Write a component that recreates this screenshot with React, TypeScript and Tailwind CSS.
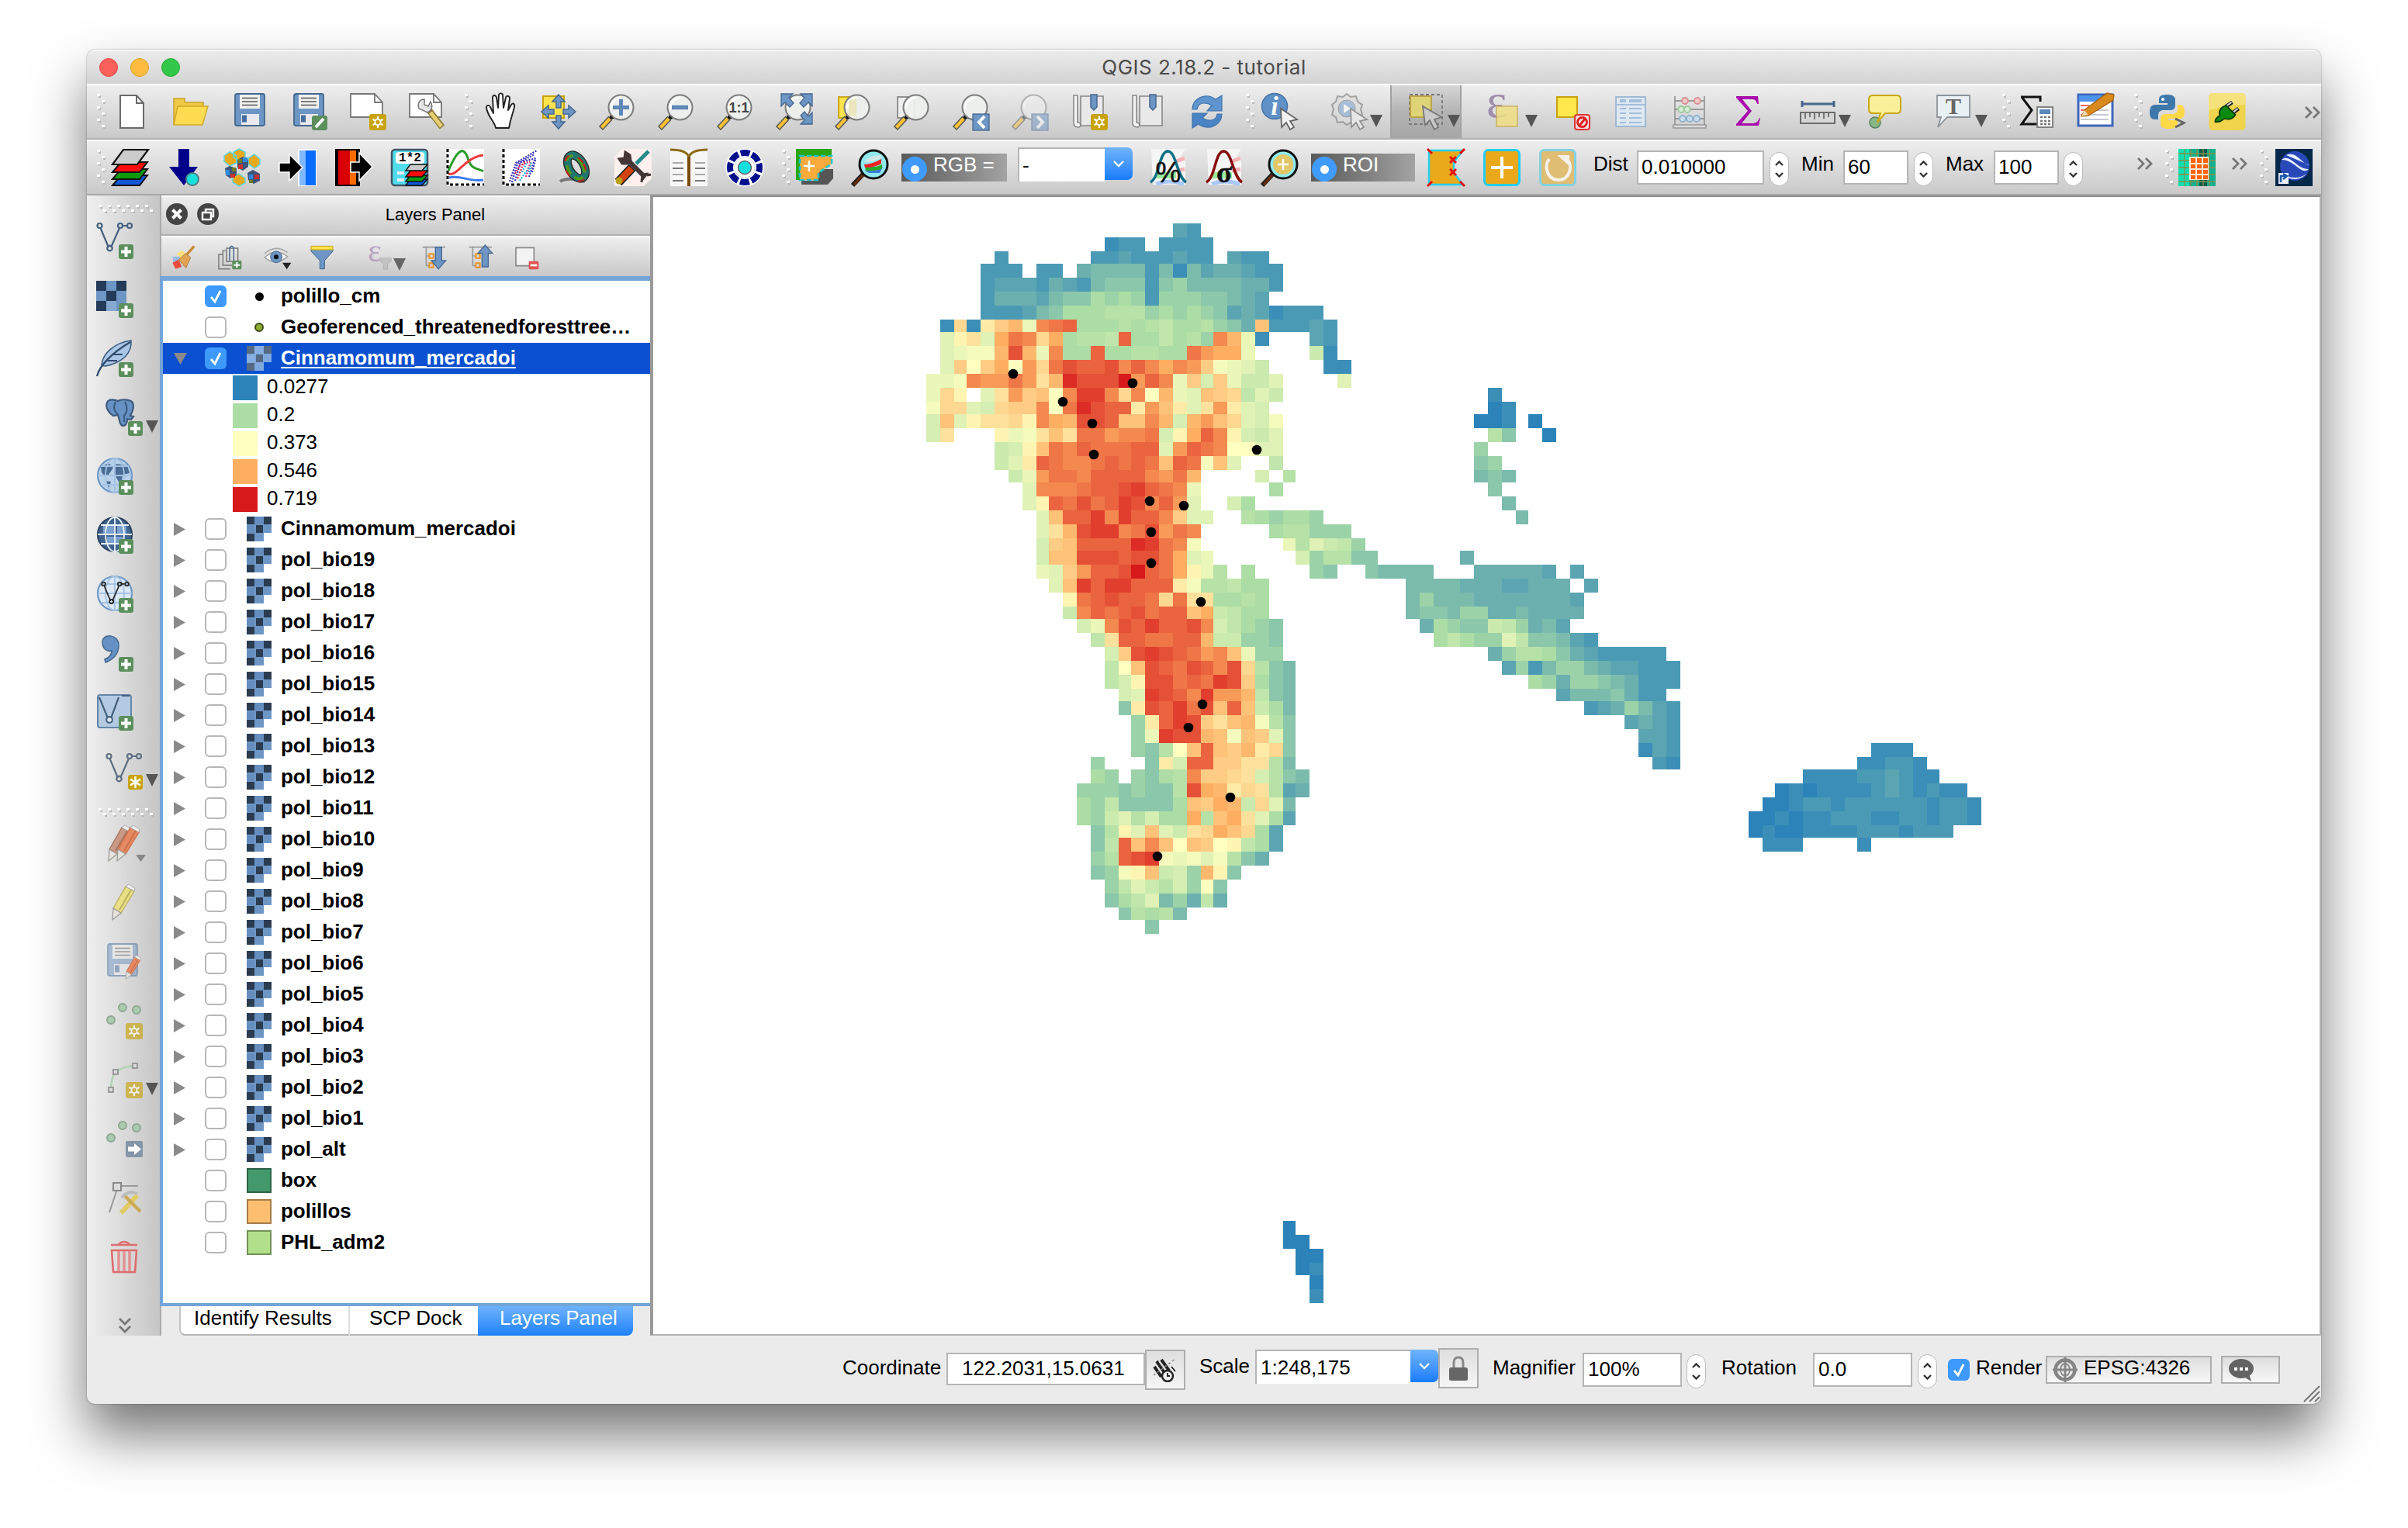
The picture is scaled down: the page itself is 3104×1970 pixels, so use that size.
import React from "react";

/* ---------- raster layer ---------- */

// Each row lists runs as "column:values"; a value is a position on the 0..32 colour ramp.
const RASTER: Record<number, string> = {
  0: "18:32",
  1: "13:122 17:2222",
  2: "5:2 12:223222322 22:322",
  3: "4:222 8:22 11:455552515344322",
  4: "4:2333243256662675555442",
  5: "4:244435668787277766543",
  6: "4:2223568889997878763431222",
  7: "1:1k1ilneqrs888989a88976 23:4m22232",
  8: "1:dhjdorqko899as88a897qne1 28:32",
  9: "1:deffntneq88s889988rpooe 28:b1",
  10: "1:dlglogpkrtsstqsqoqplfedb 29:11",
  11: "0:eefqpprpjnvtttwpsqelclebbd 30:d",
  12: "0:ekh 4:djplmgquuqkqgnedmlkadb 41:1",
  13: "0:fkkdckllqgrvtssipmidjpidc 41:01",
  14: "0:cmdhjjkhqonttsmmqncnpmkdcf 40:001 44:0",
  15: "0:cj 5:hefjmjrrpqqrchosqhcbd 41:96 45:0",
  16: "5:bchmrqsrrrssdpsrqggdd 40:7",
  17: "5:bdisrqqrsrsrmsrfmd 25:a 40:67",
  18: "6:beprrqssssqprn 24:c 26:9 40:565",
  19: "7:dqqqrsstusrqe 25:8 41:6",
  20: "7:dhsrtrsutqspd 22:c8 42:5",
  21: "8:dmssuqussqldd 23:987887 43:5",
  22: "8:djntuuqrtprq 25:899777",
  23: "8:clmssssvurqf 26:e9dba7",
  24: "8:cmmtttsttrode 27:c79966 39:4",
  25: "8:edlpsstwsrohe9 23:8 28:76 32:65555 40:444443 47:3",
  26: "9:dmusuusssif99a88 35:555544433444 48:3",
  27: "10:hrstssrkrjj8898 35:5755544444443",
  28: "10:bqsrstrssmoba88 35:5665774454444",
  29: "11:ceqtsusstqca876 36:48766ba7453",
  30: "12:ajssrrssnbb776 37:8a877da665 47:32",
  31: "13:cltutsrpqme77 41:4799864322222",
  32: "13:agmtsrtsqtk965 42:3725775433222",
  33: "13:achttrsrutl865 44:87477654222",
  34: "14:cdutsquppna65 46:35556422",
  35: "14:6itsurtmsmb85 48:2347532",
  36: "15:7isutljmnf96 51:3432",
  37: "15:7euttnmfmld6 52:332",
  38: "15:769gmsmlnik6 52:132 69:111",
  39: "12:7 16:6icsslljj95 53:21 68:11221",
  40: "12:87 15:7689qllkjc965 64:1111223211",
  41: "11:777676 17:69tonikj934 62:01011112321211",
  42: "11:87a66668mlonbkd5 61:0012212222221221",
  43: "11:87bd9c88o9mojd83 60:00101122211221221",
  44: "12:69hdmdbjkomk83 60:010011112221222",
  45: "12:6asmqmgmlgha83 61:111 68:1",
  46: "12:79stufefdf964",
  47: "12:67fhmbc7nh6",
  48: "13:7adb9c7g6",
  49: "13:68ad574a4",
  50: "14:69895",
  51: "16:6",
  73: "26:0",
  74: "26:00",
  75: "27:00",
  76: "27:01",
  77: "28:0",
  78: "28:1",
};

const NARROW_COLS = [2, 8, 14, 20, 26, 32, 38, 43, 49, 55, 61, 67, 73];
const NARROW_ROWS = [2, 7, 13, 18, 23, 28, 34, 39, 44, 50, 55, 60, 66, 71, 76];
const edge = (origin: number, narrow: number[], i: number) =>
  origin + i * 18 - 2 * narrow.filter((n) => n < i).length;
const colX = (i: number) => edge(1194, NARROW_COLS, i);
const rowY = (i: number) => edge(288, NARROW_ROWS, i);

const STOPS = [
  [43, 131, 186],
  [171, 221, 164],
  [255, 255, 191],
  [253, 174, 97],
  [215, 25, 28],
];
const ramp = (c: string) => {
  const v = parseInt(c, 36) / 8;
  const k = Math.min(3, Math.floor(v));
  const t = v - k;
  return `rgb(${STOPS[k].map((a, i) => Math.round(a + (STOPS[k + 1][i] - a) * t)).join(",")})`;
};

const POINTS = [
  [1306, 482], [1460, 494], [1370, 518], [1408, 546], [1410, 586], [1620, 580],
  [1482, 646], [1526, 652], [1484, 686], [1484, 726], [1548, 776], [1550, 908],
  [1532, 938], [1586, 1028], [1492, 1104],
];

function MapCanvas() {
  const cells: React.ReactNode[] = [];
  for (const [r, runs] of Object.entries(RASTER)) {
    const row = Number(r);
    for (const run of runs.split(" ")) {
      const [start, vals] = run.split(":");
      [...vals].forEach((c, k) => {
        const col = Number(start) + k;
        cells.push(
          <rect key={`${row}-${col}`} x={colX(col)} y={rowY(row)} width={colX(col + 1) - colX(col)} height={rowY(row + 1) - rowY(row)} fill={ramp(c)} />
        );
      });
    }
  }
  return (
    <svg className="block h-[1466px] w-[2148px]" viewBox="842 254 2148 1466" shapeRendering="crispEdges">
      {cells}
      <g shapeRendering="auto">
        {POINTS.map(([x, y]) => (
          <circle key={`${x},${y}`} cx={x} cy={y} r="6.3" fill="#000" />
        ))}
      </g>
    </svg>
  );
}

/* ---------- icons ---------- */

type P = { children?: React.ReactNode; className?: string };
const I = ({ children, className = "size-12" }: P) => (
  <svg className={`${className} block shrink-0 overflow-visible`} viewBox="0 0 48 48" fill="none">
    {children}
  </svg>
);

const Star = () => (
  <g>
    <rect x="26" y="27" width="22" height="21" rx="3" fill="#c8a30c" />
    <path d="M37 30v15M30.5 33.7l13 7.6M30.5 41.3l13-7.6" stroke="#fff" strokeWidth="2.2" />
    <circle cx="37" cy="37.5" r="3.6" fill="#c8a30c" stroke="#fff" strokeWidth="1.8" />
  </g>
);
const Plus = () => (
  <g>
    <rect x="29" y="29" width="19" height="19" rx="3" fill="#5b8f5c" />
    <path d="M38.500 32v13M32 38.500h13" stroke="#fff" strokeWidth="4" />
  </g>
);
const Lens = ({ children }: P) => (
  <g>
    <path d="M2.500 45.500L15 32" stroke="#555" strokeWidth="7" />
    <path d="M3.500 44.500L14 33" stroke="#fcc234" strokeWidth="4.200" />
    <circle cx="17" cy="30.500" r="3" fill="#111" />
    <circle cx="28.500" cy="18.500" r="16" fill="#eef0ee" fillOpacity=".93" stroke="#7d7d7d" strokeWidth="2" />
    <path d="M16 20a13 13 0 0 1 13-14" stroke="#fff" strokeWidth="3" opacity=".8" />
    {children}
  </g>
);
const Cursor = () => <path d="M25 20l1 24 6-6 5 9 5-3-5-8 9-2z" fill="#f2f2f2" stroke="#666" strokeWidth="1.800" />;
const Disk = () => (
  <g>
    <rect x="5" y="1" width="38" height="41" rx="2.500" fill="#6d96c5" stroke="#44678f" strokeWidth="1.800" />
    <path d="M11 2h26v18H11z" fill="#f1f1ee" />
    <path d="M14 6.500h20M14 11h20M14 15.500h20" stroke="#555" strokeWidth="1.600" />
    <path d="M13 27h23v14H13z" fill="#e9e9ee" />
    <path d="M14 28.500h6v9h-6z" fill="#456d9e" />
  </g>
);
const Page = () => (
  <path d="M2 1h31l10 11v19H2z" fill="#fff" stroke="#777" strokeWidth="1.800" />
);
const V = ({ c = "#45617f" }: { c?: string }) => (
  <g stroke={c} strokeWidth="2.200">
    <path d="M5.500 8L16 33M19 33L30 8M34 5h5" />
    <circle cx="4.500" cy="5" r="3" /><circle cx="31" cy="5" r="3" /><circle cx="43" cy="5" r="3" /><circle cx="17.500" cy="34" r="3.300" />
  </g>
);
const Arrow = ({ className = "ml-[2px]" }: P) => (
  <svg className={`${className} mt-7 block h-4 w-4 shrink-0`} viewBox="0 0 16 16"><path d="M0 0h16L8 16z" fill="#555" /></svg>
);

const NewDoc = () => (<I><path d="M9 3h21l9 10v32H9z" fill="#fff" stroke="#6b6b6b" strokeWidth="2" /><path d="M30 3v10h9" stroke="#6b6b6b" strokeWidth="2" /></I>);
const Folder = () => (<I><path d="M2 41V7h14v5h24v5" fill="#efcb45" stroke="#c9a227" strokeWidth="1.500" /><path d="M2 41L7 17h39l-7 24z" fill="#fddc52" stroke="#d3a92a" strokeWidth="1.500" /></I>);
const Save = () => <I><Disk /></I>;
const SaveAs = () => (<I><Disk /><rect x="28" y="29" width="20" height="19" rx="3" fill="#5b8f5c" /><path d="M33 44L43 33" stroke="#fff" strokeWidth="4" /></I>);
const NewComposer = () => (<I><Page /><path d="M33 1v11h10" stroke="#777" strokeWidth="1.800" /><Star /></I>);
const Manager = () => (<I><Page /><path d="M33 1v11h10" stroke="#777" strokeWidth="1.800" /><path d="M27 22l17 22" stroke="#8a7a3a" strokeWidth="8" /><path d="M29 25l14 18" stroke="#e8cf72" strokeWidth="5" /><path d="M21 8c-7 0-9 6-7 12l11 5c6-3 7-8 4-14l-3 6-5-2z" fill="#e6e6e6" stroke="#777" strokeWidth="1.500" /></I>);
const Hand = () => (<I><path transform="translate(2 0)" d="M17 45c-1-8-10-14-12-26 0-4 4-4 5-1l4 8-1-20c0-4 4-4 5 0l2 13 1-16c0-4 5-3 5 0l1 16 3-13c1-4 5-2 5 1l-2 15 4-7c2-3 5-1 4 3-2 9-5 15-7 27z" fill="#fff" stroke="#222" strokeWidth="1.900" strokeLinejoin="round" /></I>);
const PanSel = () => (<I><rect x="4" y="4" width="27" height="28" fill="#ffe34d" stroke="#c9a212" strokeWidth="2" /><path d="M24 2l8 9h-5v8h-6v-8h-5zM24 46l8-9h-5v-8h-6v8h-5zM2 24l9-8v5h7v6h-7v5zM46 24l-9-8v5h-7v6h7v5z" fill="#6d96c5" stroke="#44678f" strokeWidth="1.500" /></I>);
const ZoomIn = () => <I><Lens><path d="M28.500 8v21M18 18.500h21" stroke="#5e88b8" strokeWidth="5" /></Lens></I>;
const ZoomOut = () => <I><Lens><path d="M18 18.500h21" stroke="#5e88b8" strokeWidth="5.500" /></Lens></I>;
const Zoom11 = () => <I><Lens><text x="28.500" y="25" textAnchor="middle" fontFamily="Liberation Sans" fontWeight="bold" fontSize="18" fill="#444">1:1</text></Lens></I>;
const ZoomFull = () => (<I><Lens /><path d="M7 1h15l-5 5 6 7-5 5-6-6-5 5zM47 1H32l5 5-6 7 5 5 6-6 5 5zM47 40H32l5-5-5-6 5-5 5 6 5-5z" fill="#6d96c5" stroke="#44678f" strokeWidth="1.300" /></I>);
const ZoomSel = () => (<I><rect x="5" y="5" width="22" height="27" fill="#ffe34d" stroke="#c9a212" strokeWidth="1.800" /><Lens><path d="M28 7v22h-10V10z" fill="#e9e2b0" opacity=".8" /></Lens></I>);
const ZoomLayer = () => (<I><rect x="5" y="5" width="22" height="27" fill="#eee" stroke="#888" strokeWidth="1.800" /><Lens /></I>);
const ZoomLast = () => (<I><Lens /><rect x="26" y="27" width="21" height="21" fill="#6d96c5" stroke="#44678f" strokeWidth="1.300" /><path d="M41 30l-7 7.500 7 7.500" stroke="#fff" strokeWidth="4" /></I>);
const ZoomNext = () => (<I className="size-12 opacity-50"><Lens /><rect x="26" y="27" width="21" height="21" fill="#6d96c5" stroke="#44678f" strokeWidth="1.300" /><path d="M33 30l7 7.500-7 7.500" stroke="#fff" strokeWidth="4" /></I>);
const BookBody = () => (<g><path d="M13 4h29v38H13z" fill="#e9e9e9" stroke="#888" strokeWidth="1.600" /><path d="M4 3h5v35c5 0 5 6 1 6-4 0-6-2-6-6z" fill="#f4f4f4" stroke="#888" strokeWidth="1.600" /><path d="M26 2h8v16l-4 4-4-4z" fill="#6d96c5" stroke="#44678f" strokeWidth="1.500" /></g>);
const BookmarkNew = () => <I><BookBody /><Star /></I>;
const Bookmarks = () => <I><BookBody /></I>;
const Refresh = () => (<I><path d="M5 21C5 8 21-2 35 8l8-5v20H24l6-7c-9-6-18-3-19 5z" fill="#5f94cf" stroke="#3f73ac" strokeWidth="1.200" /><path d="M43 27c0 13-16 23-30 13l-8 5V26h19l-6 6c9 6 18 3 19-5z" fill="#4a84c4" stroke="#3f73ac" strokeWidth="1.200" /></I>);
const Identify = () => (<I><circle cx="17" cy="17" r="16.500" fill="#5f90c6" stroke="#4673a6" strokeWidth="1.500" /><text x="17" y="28" textAnchor="middle" fontFamily="Liberation Serif" fontStyle="italic" fontWeight="bold" fontSize="34" fill="#fff">i</text><Cursor /></I>);
const RunAction = () => (<I className="size-12 opacity-60"><path d="M20 1l5 4 7-1 2 7 6 4-2 6 2 7-6 4-2 7-7-1-5 3-5-4-7 1-2-7-5-3 2-7-2-6 5-4 2-7 7 1z" fill="#ddd" stroke="#777" strokeWidth="2" /><circle cx="20" cy="20" r="11" fill="#83a8d3" stroke="#777" /><path d="M16 14l9 6-9 6z" fill="#fff" /><Cursor /></I>);
const SelectRect = () => (<I><rect x="1" y="2" width="42" height="38" stroke="#777" strokeWidth="1.800" strokeDasharray="4 3" /><rect x="2" y="4" width="27" height="27" fill="#dfd377" stroke="#b9a142" strokeWidth="1.800" /><path d="M18 17l3 24 6-6 6 12 5-3-5-10 9-3z" fill="#c9c9c9" stroke="#777" strokeWidth="1.800" /></I>);
const SelectExpr = () => (<I><text x="0" y="31" fontFamily="Liberation Serif" fontSize="62" fill="#a08cab">ε</text><rect x="13" y="17" width="27" height="26" fill="#f1e07c" stroke="#cdb35c" strokeWidth="1.800" opacity=".8" /></I>);
const Deselect = () => (<I><rect x="5" y="5" width="26" height="26" fill="#ffe74c" stroke="#c9a212" strokeWidth="2" /><rect x="28" y="28" width="19" height="19" rx="3" fill="#f6dcdc" stroke="#d33" strokeWidth="2" /><circle cx="37.500" cy="37.500" r="6" stroke="#d22" strokeWidth="2.800" /><path d="M33 43l9-11" stroke="#d22" strokeWidth="2.800" /></I>);
const Table = () => (<I><rect x="5" y="5" width="38" height="38" fill="#dde8f2" stroke="#9bb5d2" strokeWidth="1.800" /><path d="M10 10h8M22 10h16" stroke="#a5bedb" strokeWidth="4" /><path d="M5 15h38M10 20h8M22 20h16M10 26h8M22 26h16M10 32h8M22 32h16M10 38h8M22 38h16" stroke="#a5bedb" strokeWidth="2.200" /></I>);
const Abacus = () => (<I><path d="M5 4v38M43 4v38M5 10h38M5 21h38M5 33h38" stroke="#999" strokeWidth="1.800" /><path d="M3 41h42v4H3z" fill="#ddd" stroke="#999" strokeWidth="1.600" /><g strokeWidth="1.800"><g fill="#f2c9c9" stroke="#d89090"><ellipse cx="18" cy="10" rx="4" ry="4" /><ellipse cx="34" cy="10" rx="4" ry="4" /></g><g fill="#d3ecd3" stroke="#9fc99f"><circle cx="13" cy="21" r="4" /><circle cx="21" cy="21" r="4" /></g><g fill="#c7dcec" stroke="#8fb1cf"><circle cx="15" cy="33" r="4" /><circle cx="24" cy="33" r="4" /><circle cx="33" cy="33" r="4" /></g></g></I>);
const Sum = () => (<I><path d="M8 4h28l1 10h-2c-1-5-3-6-8-6H16l12 15-13 16h14c5 0 7-2 9-7h1l-2 10H8v-2l15-17L8 6z" fill="#a80cab" /></I>);
const Ruler = () => (<I><path d="M3 14h41M3 10v8M44 10v8" stroke="#47678c" strokeWidth="3" /><rect x="1" y="25" width="44" height="14" fill="#d7d7d7" stroke="#6c6c6c" strokeWidth="2" /><path d="M7 25v8M13 25v6M19 25v9M25 25v6M31 25v8M37 25v6" stroke="#6c6c6c" strokeWidth="1.800" /></I>);
const MapTip = () => (<I><circle cx="11" cy="38" r="7" fill="#86b886" stroke="#5a7f5a" strokeWidth="1.500" /><path d="M8 3h31q5 0 5 5v13q0 5-5 5H24L14 38l4-12H8q-5 0-5-5V8q0-5 5-5z" fill="#fbf09a" stroke="#c9a812" strokeWidth="2" /></I>);
const TextNote = () => (<I><path d="M1 3h42v28H14L2 44l4-13H1z" fill="#e9f0f4" stroke="#8d9499" strokeWidth="1.800" /><text x="22" y="27" textAnchor="middle" fontFamily="Liberation Serif" fontSize="30" fontWeight="bold" fill="#666">T</text></I>);
const SumCalc = () => (<I><path d="M3 5h25v6M4 5l13 17L4 40h22" stroke="#111" strokeWidth="3" /><rect x="24" y="18" width="20" height="26" fill="#fff" stroke="#777" strokeWidth="1.800" /><path d="M27 21h14v6H27z" fill="#5b84bb" /><path d="M28 31h3M33 31h3M38 31h3M28 36h3M33 36h3M38 36h3M28 40h3M33 40h3M38 40h3" stroke="#777" strokeWidth="2.400" /></I>);
const Editor = () => (<I><rect x="1" y="2" width="44" height="40" fill="#fff" stroke="#3f66bb" strokeWidth="3" /><path d="M2 3h42v8H2z" fill="#4c94ee" /><path d="M4 16h11M4 22h9M4 28h10" stroke="#f06a5a" strokeWidth="2" /><path d="M18 22h22M18 28h22M4 34h36" stroke="#c5c9d4" strokeWidth="2" /><path d="M5 30l5-9L38 0l9 2-1 7-32 20z" fill="#d98b1d" stroke="#a66410" strokeWidth="1.300" /><path d="M5 30l4-8 5 6z" fill="#f2d9a8" /></I>);
const Python = () => (<I><path d="M23 2c-9 0-10 3-10 7v4h11v2H8c-5 0-7 4-7 10s2 9 7 9h4v-5c0-5 3-7 7-7h9c4 0 6-3 6-6V9c0-5-4-7-11-7z" fill="#3e78aa" /><path d="M26 46c9 0 11-3 11-7v-4H25v-2h15c5 0 6-4 6-9s-2-9-6-9h-3v5c0 5-3 7-7 7h-9c-4 0-6 3-6 6v6c0 5 4 7 11 7z" fill="#ffd948" /><circle cx="18" cy="8" r="2" fill="#fff" /><path d="M34 33l11 5.500L34 44" stroke="#666" strokeWidth="3" /></I>);
const Plug = () => (<I><g transform="translate(1.500 0)"><rect x="0" y="0" width="47" height="48" rx="5" fill="#efd44c" /><path d="M0 22V5q0-5 5-5h37q5 0 5 5v10Q26 14 0 22z" fill="#f6e27c" /><path d="M22 17l8-5M30 26l8-6" stroke="#222" strokeWidth="5" /><path d="M23 16l6-4M31 25l6-5" stroke="#ddd" strokeWidth="2" /><path d="M8 37c0-5 3-6 6-8-2-7 2-11 8-13l12 12c-3 5-7 7-14 5-3 1-4 4-9 4z" fill="#0d8a0d" stroke="#0a3d0a" strokeWidth="1.800" /></g></I>);

const slab = (y: number, c: string) => <path d={`M12 ${y}h34L36 ${y + 13}H1z`} fill={c} stroke="#111" strokeWidth="2" />;
const Layers = () => <I>{slab(34, "#1056d8")}{slab(26, "#0b9b0b")}{slab(17, "#fa0a0a")}<path d="M15 1h32L33 20H1z" fill="#ccc" stroke="#111" strokeWidth="2.200" /></I>;
const Download = () => (<I><path d="M14 0h14v23h11L21 47 2 23h12z" fill="#00008b" /><circle cx="32" cy="39" r="8" fill="#18e0dc" stroke="#4a7c84" strokeWidth="2" /></I>);
const Hexes = () => (<I><g fill="#e9a91a" stroke="#5fd6dc" strokeWidth="1.500"><path d="M8 4l9 5v9l-9 4-7-6V9zM20 0l8 4v8l-8 3-7-4V4zM40 7l7 6v7l-7 5-8-6v-7zM20 32l8 6v6l-8 4-8-5v-7z" /></g><g><path d="M2 25l6-3 9 3v9l-8 4-6-4zM18 14l7-4 7 4v9l-7 5-7-4zM31 31l7-4 9 5v9l-8 4-7-5z" fill="#3d5578" /><path d="M3 27h5v7H3zM25 11h6v6h-6zM33 33h5v6h-5z" fill="#2f8ae0" /><path d="M9 32h6v5H9zM19 20h6v6h-6zM40 33h6v6h-6z" fill="#c63131" /><path d="M11 24h5v5h-5zM19 13h5v5h-5zM33 40h5v4h-5z" fill="#6f7d18" /></g></I>);
const ImportI = () => (<I><path d="M24 0h24v48H24z" fill="#fff" /><path d="M26 2h9v45h-9z" fill="#80b8ff" /><path d="M34 2h13v45H34z" fill="#0a6cff" /><path d="M0 18h13V7l17 17-17 17V30H0z" fill="#000" stroke="#fff" strokeWidth="1.500" /></I>);
const ExportI = () => (<I><path d="M0 0h32v48H0z" fill="#000" /><path d="M4 2h16v44H4z" fill="#d80000" /><path d="M19 2h8v44h-8z" fill="#ff6a00" /><path d="M20 17h11V5l17 18-17 18V30H20z" fill="#000" stroke="#fff" strokeWidth="1.500" /></I>);
const mini = (y: number, c: string) => <path d={`M25 ${y}h22l-7 8H19z`} fill={c} stroke="#111" strokeWidth="1.500" />;
const Calc = () => (<I><rect x="1" y="1" width="46" height="46" rx="4" fill="#4fdceb" stroke="#456" strokeWidth="2.500" /><rect x="6" y="4" width="37" height="15" rx="4" fill="#fff" /><text x="24.500" y="16" textAnchor="middle" fontFamily="Liberation Mono" fontWeight="bold" fontSize="16" fill="#000">1*2</text><path d="M8 31h9M8 40h9" stroke="#eee" strokeWidth="4" />{mini(39, "#1056d8")}{mini(34, "#0b9b0b")}{mini(28, "#fa0a0a")}{mini(20, "#ccc")}</I>);
const Chart = () => (<I><path d="M0 0h48v48H0z" fill="#fff" /><path d="M2 28C14 0 22-4 27 12s12 12 20 17" stroke="#2a9c2a" strokeWidth="3" /><path d="M2 32c12 4 20-21 45-24" stroke="#f03a3a" strokeWidth="3" /><path d="M3 37c14-4 26 6 44 3" stroke="#3a7cf0" strokeWidth="3" /><path d="M1 0v46h47" stroke="#000" strokeWidth="3" strokeDasharray="4 3" /></I>);
const Scatter = () => (<I><path d="M0 0h48v48H0z" fill="#fff" /><g strokeDasharray="2 1.600" strokeWidth="2.200"><path d="M9 42L17 18 44 2M12 43l7-24 22-12M16 41l7-24 20-5M34 36l7-22M38 30l4-16" stroke="#3434b4" /><path d="M19 38l9-22M30 36l6-20M21 22l14-6M16 32l6-10" stroke="#e0245e" /><path d="M22 41l11-16M34 30l3-14M25 30l6-12" stroke="#2aa8e0" /></g><path d="M1 0v46h47" stroke="#000" strokeWidth="3" strokeDasharray="4 3" /></I>);
const Ring = () => (<I><path d="M2 42c6-4 18-4 32 0" stroke="#777" strokeWidth="4" /><g transform="rotate(-30 23 23)"><ellipse cx="23" cy="23" rx="9.500" ry="16.500" stroke="#222" strokeWidth="11" /><ellipse cx="23" cy="23" rx="9.500" ry="16.500" stroke="#20766f" strokeWidth="8.500" /><ellipse cx="21.500" cy="23" rx="9.500" ry="16" stroke="#4f9a18" strokeWidth="3.500" strokeDasharray="12 6" /><ellipse cx="21" cy="24" rx="12" ry="18" stroke="#b8281c" strokeWidth="2.400" strokeDasharray="9 12" /></g></I>);
const Tools = () => (<I><path d="M10 0h38v38l-10 10H0V10z" fill="#fdf0ee" /><path d="M44 3L28 19" stroke="#268b8b" strokeWidth="5" /><path d="M23 24L5 43" stroke="#222" strokeWidth="12" /><path d="M22 25L6 42" stroke="#d2430d" strokeWidth="9" /><circle cx="6" cy="41" r="4.500" fill="#b8a113" /><path d="M15 12l24 24" stroke="#453636" strokeWidth="6" /><path d="M14 4l-1 8-7 1 4 6 8 0 3-4-1-7zM35 43l1-10 8-1M47 33l-5 1" fill="#453636" stroke="#453636" strokeWidth="3" /></I>);
const Book = () => (<I><path d="M0 1h48v47H0z" fill="#f7f7f7" /><path d="M0 1q22 0 24 10Q26 1 48 1" stroke="#8b6a14" strokeWidth="3" /><path d="M24 10v38" stroke="#7a4a08" strokeWidth="4" /><path d="M3 18h14M3 33h14M32 18h13M32 33h13" stroke="#aaa" strokeWidth="2" /><path d="M3 25h14M3 41h14M32 25h13M32 41h13" stroke="#777" strokeWidth="2" /></I>);
const Gear = () => (<I><circle cx="24" cy="24" r="19" stroke="#fff" strokeWidth="11" /><circle cx="24" cy="24" r="19" stroke="#00108b" strokeWidth="8" strokeDasharray="11.900 3.020" strokeDashoffset="6" /><circle cx="24" cy="24" r="12.500" fill="#fff" /><circle cx="24" cy="24" r="8.500" fill="#13dede" stroke="#666" strokeWidth="1.500" /></I>);
const RoiGreen = () => (<I><path d="M7 41h22V26h19v12L41 46H7z" fill="#555" /><path d="M0 0h46v9H6v31H0z" fill="#2ba60f" /><path d="M5 9h41v10L29 31v9H5z" fill="#f8aa3c" stroke="#12c4cc" strokeWidth="2.600" strokeDasharray="6 3" /><path d="M17 15v14M10 22h14" stroke="#fff" strokeWidth="2.500" /></I>);
const MagBlack = ({ children }: P) => (<I><path d="M1 47L16 31" stroke="#222" strokeWidth="6" /><path d="M3 46L15 33" stroke="#6b2c0a" strokeWidth="3" /><circle cx="28" cy="20" r="18" fill="#8fe9ee" stroke="#111" strokeWidth="3" />{children}</I>);
const MagLayers = () => (<MagBlack><path d="M17 28l4-5h19l-4 8H22z" fill="#3a7be0" /><path d="M17 23q12 2 22-3v5q-8 4-21 3z" fill="#2bab2b" /><path d="M16 20q10 0 22-7v6q-8 5-21 5z" fill="#ee2222" /><path d="M18 14q7-6 20-6v4q-10 5-21 5z" fill="#cfe6e6" /></MagBlack>);
const MagPlus = () => (<MagBlack><circle cx="28" cy="20" r="13" fill="#e2c768" /><path d="M28 13v14M21 20h14" stroke="#fff" strokeWidth="2.500" /></MagBlack>);
const Bell = ({ c, t, w }: { c: string; t: string; w: string }) => (
  <I><path d="M2 0h44L37 15l9-3v34H4z" fill="#f5f5f5" /><path d="M34 16l11-4M34 28l11-2" stroke="#f6b4b4" strokeWidth="5" /><path d="M8 34h26" stroke="#9aeb9a" strokeWidth="8" /><path d="M8 45q16-6 36 0" stroke="#a8c8ff" strokeWidth="5" /><path d="M1 43C13 36 12 4 23 3s12 33 24 40" stroke={c} strokeWidth="3.500" /><text x="24" y="43" textAnchor="middle" fontFamily={w} fontWeight={t === "σ" ? "bold" : "normal"} fontSize="37" fill="#111" stroke="#111" strokeWidth=".5">{t}</text></I>
);
const RoiPoly = () => (<I><path d="M2 2h44L34 17v14l12 15H2z" fill="#e9a91a" stroke="#23cff0" strokeWidth="2.500" /><path d="M0 0l6 6M42 6l6-6M0 48l6-6M42 42l6 6M29 10l8 8M37 10l-8 8M29 26l8 8M37 26l-8 8" stroke="#e60d0d" strokeWidth="3" /></I>);
const AddBtn = () => (<I><rect x="1.500" y="1.500" width="45" height="45" rx="5" fill="#e9a91a" stroke="#22cdf5" strokeWidth="3" /><path d="M24 10v28M10 24h28" stroke="#fff" strokeWidth="4" /></I>);
const UndoBtn = () => (<I><rect x="1.500" y="1.500" width="45" height="45" rx="5" fill="#dfbd73" stroke="#83d2e2" strokeWidth="3" /><path d="M13 13C6 22 10 39 24 40s20-16 13-26" stroke="#f5f1ea" strokeWidth="4" /><path d="M26 9h12v11z" fill="#f5f1ea" stroke="#f5f1ea" strokeWidth="2" /></I>);
const GridI = () => (<I><path d="M0 0h48v48H0z" fill="#12b08c" /><path d="M0 0h14v48H0z" fill="#0de0b0" /><path d="M27 0h10v48H27z" fill="#0a5c48" /><path d="M8 0v48M16 0v48M24 0v48M32 0v48M40 0v48M0 6h48M0 15h48M0 24h48M0 33h48M0 42h48" stroke="#8a8f4a" strokeWidth="1.300" /><path d="M14 10h25v30H14z" fill="#ffe9dc" /><path d="M16 12h6v6h-6zM24 12h6v6h-6zM32 12h6v6h-6zM16 20h6v5h-6zM24 20h6v5h-6zM32 20h6v5h-6zM16 27h6v5h-6zM24 27h6v5h-6zM32 27h6v5h-6zM16 34h6v5h-6zM24 34h6v5h-6zM32 34h6v5h-6z" fill="#ff6206" /></I>);
const Earth = () => (<I><path d="M0 0h48v48H0z" fill="#03284a" /><circle cx="25" cy="22" r="19" fill="#2949b8" /><path d="M8 14C19 5 28 27 43 26c-9 9-18-12-35-12zM14 8c14-6 20 12 30 13M8 32q18 10 33 0-16 14-33 0z" fill="#e9f0ff" /><rect x="4" y="31" width="13" height="14" fill="#e8eef8" /><path d="M7 43V35h7M10 32l5 3-5 4" stroke="#1b57a8" strokeWidth="2.500" /></I>);

/* left toolbar */
const AddVector = () => <I><V /><Plus /></I>;
const AddRaster = () => (<I><path d="M0 0h39v39H0z" fill="#6d96c5" /><path d="M0 0h13v13H0zM26 0h13v13H26zM13 13h13v13H13zM0 26h13v13H0z" fill="#243b5a" /><path d="M13 26h13v13H13z" fill="#86a9d2" /><Plus /></I>);
const Feather = () => (<I><path d="M7 33C8 17 24 4 45 1c1 15-9 28-33 33z" fill="#a9c6e6" stroke="#3f5c80" strokeWidth="1.600" /><path d="M1 47C4 34 20 17 44 3M14 27h13M20 19h14" stroke="#2e4a6d" strokeWidth="2.200" /><Plus /></I>);
const Elephant = () => (<I><path d="M2 5C4 0 12 1 16 3c4-3 16-2 19 2 3 7-1 13-3 17l4 1-3 4-5-1c0 11-9 12-10 2l-2-7-6 1C6 20-1 12 2 5z" fill="#6591c4" stroke="#3c5a7e" strokeWidth="2.200" /><path d="M13 4c-4 8-1 13 3 16M25 4c4 7 3 14-1 18v8" stroke="#3c5a7e" strokeWidth="2" /><Plus /></I>);
const Globe = ({ kind }: { kind: number }) => (
  <I>
    <circle cx="24" cy="23" r="22" fill={kind === 0 ? "#b9d2ec" : kind === 1 ? "#3f638f" : "#dce8f4"} stroke={kind === 1 ? "#2a4262" : "#6c96c4"} strokeWidth="2.200" />
    {kind === 0 && <path d="M6 12l10-5 6 6-6 9-5 2-4-5zM26 8l14 2 3 10-9 2-2 14-6-10-3-8zM12 30l7 1-3 9z" fill="#4a6d96" />}
    {kind === 1 && <path d="M9 12h14v10H9zM27 12h12v10H27zM14 26h20v10H14z" fill="#7ba2d0" />}
    <path d="M2 23h44M24 1v44M6 11h36M6 35h36" stroke={kind === 1 ? "#eef4fa" : "#a5c2e2"} strokeWidth="1.800" />
    <ellipse cx="24" cy="23" rx="12" ry="22" stroke={kind === 1 ? "#eef4fa" : "#a5c2e2"} strokeWidth="1.800" />
    {kind === 2 && <g transform="translate(6 7) scale(.78)"><V c="#222" /></g>}
    <Plus />
  </I>
);
const Comma = () => (<I><path d="M8 10c0-12 21-11 21 4 0 12-8 19-17 22l-1-4c5-2 9-6 9-11C14 23 8 18 8 10z" fill="#6591c4" stroke="#44678f" strokeWidth="1.500" /><Plus /></I>);
const Virtual = () => (<I><rect x="2" y="2" width="43" height="42" rx="3" fill="#b4cae2" stroke="#6484a8" strokeWidth="2" /><path d="M4 5l11 27M19 32L29 5M33 3h10" stroke="#45617f" strokeWidth="2.200" /><circle cx="17" cy="34" r="3.800" stroke="#45617f" strokeWidth="2.200" fill="#e3ecf5" /><Plus /></I>);
const NewShape = () => (<I><V c="#5c6f83" /><rect x="29" y="29" width="19" height="19" rx="3" fill="#c8a30c" /><path d="M38.500 31v15M32 34.700l13 7.600M32 42.300l13-7.600" stroke="#fff" strokeWidth="2.500" /></I>);
const pencil = (x: number, c: string, d: string) => (
  <g transform={`translate(${x} 0)`}><path d="M3 31L19 3l11 6-17 28z" fill={c} stroke={d} strokeWidth="1.400" /><path d="M11 33L26 7" stroke={d} strokeWidth="2" /><path d="M3 31l10 6L2 46z" fill="#e7e3dc" stroke="#999" strokeWidth="1.200" /><path d="M19 3l11 6 1-4-8-5z" fill="#eee" stroke="#aaa" strokeWidth="1" /></g>
);
const Edits = () => (<I>{pencil(0, "#c99a85", "#a87863")}{pencil(11, "#e58a63", "#cc6f48")}<path d="M37 38h13l-6.500 9z" fill="#888" /></I>);
const EditOne = () => <I>{pencil(5, "#e9df86", "#bdb25e")}</I>;
const SaveEdits = () => (<I><g opacity=".5"><Disk /></g><g transform="translate(27 16) scale(.66)">{pencil(0, "#e58a63", "#cc6f48")}</g></I>);
const dots = <g fill="#a9cbb0" stroke="#8fa893" strokeWidth="2"><circle cx="7" cy="23" r="5" /><circle cx="22" cy="7" r="5" /><circle cx="40" cy="10" r="5" /></g>;
const badge = <g opacity=".65"><Star /></g>;
const AddPts = () => <I>{dots}{badge}</I>;
const AddCurve = () => (<I><path d="M7 37C7 18 12 8 38 6" stroke="#b5d3b8" strokeWidth="3" /><g fill="#ddd" stroke="#999" strokeWidth="2"><path d="M4 34h6v6H4zM10 11h6v6h-6zM35 3h6v6h-6z" /></g>{badge}</I>);
const MovePts = () => (<I>{dots}<rect x="26" y="27" width="22" height="21" rx="2" fill="#8496a8" /><path d="M29 34.500h8V30l9 7.500-9 7.500v-4.500h-8z" fill="#fff" /></I>);
const NodeTool = () => (<I><path d="M15 13L5 43M20 9h22" stroke="#9a9a9a" strokeWidth="2" /><rect x="10" y="5" width="10" height="10" fill="#ddd" stroke="#888" strokeWidth="2" /><path d="M20 44l21-23" stroke="#e2cb62" strokeWidth="6" /><path d="M25 22l20 20" stroke="#caa955" strokeWidth="4.500" /><path d="M21 24q8-10 20-5" stroke="#bbb" strokeWidth="4" /></I>);
const Trash = () => (<I><g stroke="#dd6d6d" strokeWidth="2.600"><path d="M8 9h34M18 8q7-6 14 0M9 16h32l-2 28H11z" /><path d="M18 17v26M25 17v26M32 17v26" stroke="#e39090" strokeWidth="3.500" /></g></I>);

/* dock toolbar */
const Broom = () => (<I className="size-8"><path d="M44 2L28 20" stroke="#c98a3a" strokeWidth="5" /><path d="M10 16l12-6 4 8-8 8z" fill="#f7e27c" /><path d="M2 22h14v14H4z" fill="#9ab9e6" /><path d="M2 34l12-6 6 14-12 4z" fill="#ea4b3c" /><path d="M14 28l14-12 9 8-9 20z" fill="#e2a556" stroke="#b27a35" strokeWidth="1.500" /></I>);
const AddGroup = () => (<I className="size-8"><path d="M10 18H3v28h22M16 11h-5v28h18M18 6h22v26H18z" stroke="#777" strokeWidth="2.200" /><path d="M24 30V6q4-8 8 0v24" stroke="#47678c" strokeWidth="2.200" /><rect x="29" y="30" width="18" height="17" rx="2" fill="#5b8f5c" /><path d="M38 33v11M32 38.500h12" stroke="#fff" strokeWidth="3" /></I>);
const Eye = () => (<svg className="block h-8 w-9 shrink-0" viewBox="0 0 54 48" fill="none"><path d="M2 24Q22 4 46 22 24 42 2 24z" fill="#f4f4f4" stroke="#999" strokeWidth="2" /><path d="M2 16Q22-2 46 14" stroke="#aaa" strokeWidth="2.500" /><circle cx="24" cy="23" r="11" fill="#6d96c5" stroke="#44678f" strokeWidth="1.500" /><circle cx="24" cy="23" r="4.500" fill="#111" /><path d="M36 34h17l-8.500 13z" fill="#222" /></svg>);
const Funnel = () => (<I className="size-8"><path d="M3 8h42v4L29 30v16h-9V30L3 12z" fill="#6d96c5" stroke="#44678f" strokeWidth="1.500" /><path d="M3 2h42v7H3z" fill="#ffe34d" stroke="#c9a212" strokeWidth="1.500" /></I>);
const ExprFilter = () => (<I className="size-8"><text x="-1" y="31" fontFamily="Liberation Serif" fontSize="62" fill="#b6a3bf">ε</text><path d="M22 25h22v6l-7 5v11h-8V36l-7-5z" fill="#c2c2c2" stroke="#aaa" /></I>);
const Tree = ({ up }: { up?: boolean }) => (<I className="size-8"><path d="M1 4h44M8 4v36M8 21h5M8 40h5" stroke="#999" strokeWidth="2.500" /><path d="M14 17h8v8h-8zM14 35h8v8h-8z" stroke="#ea9424" strokeWidth="3" />{up ? <path d="M32 0l14 16h-8v26h-12V16h-8z" fill="#6d96c5" stroke="#44678f" strokeWidth="2" /> : <path d="M32 46l14-16h-8V4H26v26h-8z" fill="#6d96c5" stroke="#44678f" strokeWidth="2" />}</I>);
const Remove = () => (<I className="size-8"><path d="M3 5h35v35H3z" fill="#f2f2f2" stroke="#888" strokeWidth="2.500" /><rect x="28" y="31" width="19" height="16" rx="2" fill="#e55353" /><path d="M31 39h13" stroke="#fff" strokeWidth="4" /></I>);

/* ---------- small widgets ---------- */

const Grip = ({ className = "" }: P) => (
  <svg className={`${className} block h-12 w-3 shrink-0`} viewBox="0 0 12 48">
    {[0, 16, 32].map((y) => (
      <g key={y}>
        <path d={`M3 ${y + 3}h3v3H3zM9 ${y + 11}h3v3H9z`} fill="#b9b9b9" />
        <path d={`M1 ${y + 1}h4v3H1zM7 ${y + 9}h4v3H7z`} fill="#fff" />
      </g>
    ))}
  </svg>
);
const HGrip = ({ className = "" }: P) => (
  <svg className={`${className} block h-3 w-[72px] shrink-0`} viewBox="0 0 72 12">
    {[0, 1, 2, 3, 4, 5].map((i) => (
      <g key={i}>
        <path d={`M${i * 12 + 3} 3h3v3h-3zM${i * 12 + 9} 9h3v3h-3z`} fill="#b9b9b9" />
        <path d={`M${i * 12 + 1} 1h4v3h-4zM${i * 12 + 7} 7h4v3h-4z`} fill="#fff" />
      </g>
    ))}
  </svg>
);
const Cell = ({ children }: P) => <div className="flex w-[76px] shrink-0 justify-center">{children}</div>;
const DropCell = ({ children, className = "pl-7" }: P) => (
  <div className={`${className} flex w-[100px] shrink-0`}>{children}<Arrow /></div>
);
const Cell2 = ({ children }: P) => <div className="flex w-[72px] shrink-0 justify-center">{children}</div>;
const Spinner = ({ className = "" }: P) => (
  <div className={`${className} flex h-[44px] w-[25px] shrink-0 flex-col items-center justify-between rounded-full border border-[#b9b9b9] bg-white py-[10px]`}>
    <svg className="h-[7px] w-[11px]" viewBox="0 0 11 7" fill="none"><path d="M1 6l4.500-4.500L10 6" stroke="#333" strokeWidth="2.400" /></svg>
    <svg className="h-[7px] w-[11px]" viewBox="0 0 11 7" fill="none"><path d="M1 1l4.500 4.500L10 1" stroke="#333" strokeWidth="2.400" /></svg>
  </div>
);
const Field = ({ children, className = "" }: P) => (
  <div className={`${className} flex shrink-0 items-center border-2 border-[#b5b5b5] bg-white pb-[2px] text-[26px] leading-none`}>{children}</div>
);
const More = ({ className = "" }: P) => (
  <svg className={`${className} block h-4 w-[22px] shrink-0`} viewBox="0 0 22 16" fill="none">
    <path d="M2 1l7 7-7 7M12 1l7 7-7 7" stroke="#777" strokeWidth="2.800" />
  </svg>
);
const RadioLabel = ({ children, className = "" }: P) => (
  <div className={`${className} flex h-9 shrink-0 bg-linear-to-r from-[#5a5a5a] to-[#a3a3a3] pl-[1px]`}>
    <span className="mt-1 flex size-8 items-center justify-center rounded-full bg-[#3f9bff]"><span className="size-[11px] rounded-full bg-white" /></span>
    <span className="mt-[1px] ml-2 text-[26px] leading-[26px] text-white">{children}</span>
  </div>
);
const ComboButton = ({ className = "" }: P) => (
  <div className={`${className} flex h-[42px] w-9 shrink-0 items-center justify-center rounded-r-[7px] bg-linear-to-b from-[#6fb4fa] to-[#167bfb]`}>
    <svg className="h-[9px] w-[14px]" viewBox="0 0 14 9" fill="none"><path d="M1 1l6 6 6-6" stroke="#fff" strokeWidth="2.400" /></svg>
  </div>
);

const Check = ({ on, className = "" }: { on?: boolean; className?: string }) =>
  on ? (
    <div className={`${className} flex size-7 shrink-0 items-center justify-center rounded-[6px] bg-[#3d99fb]`}>
      <svg className="size-5" viewBox="0 0 20 20" fill="none"><path d="M4 11l5 6 7-14" stroke="#fff" strokeWidth="2.800" /></svg>
    </div>
  ) : (
    <div className={`${className} size-7 shrink-0 rounded-[6px] border-2 border-[#b7b7b7] bg-white`} />
  );

const RasterIcon = ({ sel }: { sel?: boolean }) => (
  <svg className="block size-8" viewBox="0 0 32 32" shapeRendering="crispEdges">
    <path d="M0 0h32v21H22v11H0z" fill={sel ? "#7fa8dd" : "#6d96c5"} />
    <path d="M0 0h10v10H0zM22 0h10v10H22zM0 22h10v10H0zM12 11h9v10h-9z" fill={sel ? "#556a85" : "#2b3c51"} />
    <path d="M10 0h12v10H10zM0 12h10v9H0z" fill={sel ? "#8db4e4" : "#6088ba"} opacity=".6" />
  </svg>
);

type Kind = "dot" | "odot" | "raster" | "swatch";
type Layer = { name: string; kind: Kind; on?: boolean; sel?: boolean; color?: string };
const TOP: Layer[] = [
  { name: "polillo_cm", kind: "dot", on: true },
  { name: "Geoferenced_threatenedforesttree…", kind: "odot" },
  { name: "Cinnamomum_mercadoi", kind: "raster", on: true, sel: true },
];
const REST: Layer[] = [
  { name: "Cinnamomum_mercadoi", kind: "raster" },
  ...Array.from({ length: 19 }, (_, i): Layer => ({ name: `pol_bio${19 - i}`, kind: "raster" })),
  { name: "pol_alt", kind: "raster" },
  { name: "box", kind: "swatch", color: "#44996c" },
  { name: "polillos", kind: "swatch", color: "#fdbf6f" },
  { name: "PHL_adm2", kind: "swatch", color: "#b2df8a" },
];
const LEGEND = [
  ["#2b83ba", "0.0277"], ["#abdda4", "0.2"], ["#ffffbf", "0.373"], ["#fdae61", "0.546"], ["#d7191c", "0.719"],
];

const LayerRow = ({ l }: { l: Layer }) => (
  <div className={`flex h-10 shrink-0 items-center ${l.sel ? "bg-[#0a50d0] text-white" : "text-black"}`}>
    <div className="flex w-[54px] shrink-0 pl-[14px]">
      {l.kind === "raster" &&
        (l.sel ? (
          <svg className="h-[15px] w-[17px]" viewBox="0 0 17 15"><path d="M0 0h17L8.500 15z" fill="#8a8a8a" /></svg>
        ) : (
          <svg className="h-[17px] w-[15px]" viewBox="0 0 15 17"><path d="M0 0v17l15-8.500z" fill="#8a8a8a" /></svg>
        ))}
    </div>
    <Check on={l.on} />
    <div className="ml-[26px] flex size-8 shrink-0 items-center justify-center">
      {l.kind === "raster" && <RasterIcon sel={l.sel} />}
      {l.kind === "dot" && <span className="size-[11px] rounded-full bg-black" />}
      {l.kind === "odot" && <span className="size-3 rounded-full border-2 border-[#3c4a1c] bg-[#8bac2c]" />}
      {l.kind === "swatch" && <span className="size-8 border-2 border-black/35" style={{ backgroundColor: l.color }} />}
    </div>
    <span className={`-mt-[2px] ml-3 text-[26px] leading-[30px] font-bold tracking-[-0.03px] whitespace-nowrap ${l.sel ? "underline decoration-2 underline-offset-[3px]" : ""}`}>{l.name}</span>
  </div>
);

const SideCell = ({ children, className = "pl-3" }: P) => (
  <div className={`${className} flex h-[76px] shrink-0 pt-[14px]`}>{children}</div>
);

/* ---------- page ---------- */

export default function App() {
  return (
    <div className="h-[1970px] w-[3104px] overflow-hidden bg-white pt-16 pl-28 text-black" style={{ fontFamily: '"Liberation Sans", Arial, sans-serif' }}>
      <div className="flex h-[1746px] w-[2880px] flex-col overflow-hidden rounded-[10px] bg-[#ebebeb] shadow-[0_40px_70px_rgba(0,0,0,0.54),0_0_2px_rgba(0,0,0,0.45)]">
        {/* title bar */}
        <div className="flex h-11 shrink-0 items-center border-t-2 border-[#f6f6f6] bg-linear-to-b from-[#ebebeb] to-[#d3d3d3]">
          <div className="flex w-[120px] shrink-0 gap-4 pl-4">
            <span className="size-6 shrink-0 rounded-full border border-[#e2463f] bg-[#fc605b]" />
            <span className="size-6 shrink-0 rounded-full border border-[#dfa023] bg-[#fdbc40]" />
            <span className="size-6 shrink-0 rounded-full border border-[#27aa35] bg-[#34c84a]" />
          </div>
          <div className="flex-1 pr-[120px] text-center font-['Inter'] text-[26px] leading-[40px] tracking-[0.5px] text-[#4a4a4a]">QGIS 2.18.2 - tutorial</div>
        </div>

        {/* main toolbar */}
        <div className="flex h-[72px] shrink-0 border-t-2 border-b-2 border-t-white border-b-[#b0b0b0] bg-linear-to-b from-[#eee] to-[#c9c9c9] pt-[10px]">
          <div className="w-5 shrink-0 pl-3"><Grip /></div>
          <Cell><NewDoc /></Cell><Cell><Folder /></Cell><Cell><Save /></Cell><Cell><SaveAs /></Cell><Cell><NewComposer /></Cell><Cell><Manager /></Cell>
          <div className="w-[18px] shrink-0 pl-[10px]"><Grip /></div>
          <Cell><Hand /></Cell><Cell><PanSel /></Cell><Cell><ZoomIn /></Cell><Cell><ZoomOut /></Cell><Cell><Zoom11 /></Cell><Cell><ZoomFull /></Cell><Cell><ZoomSel /></Cell><Cell><ZoomLayer /></Cell><Cell><ZoomLast /></Cell><Cell><ZoomNext /></Cell><Cell><BookmarkNew /></Cell><Cell><Bookmarks /></Cell><Cell><Refresh /></Cell>
          <div className="w-[18px] shrink-0 pl-[11px]"><Grip /></div>
          <Cell><Identify /></Cell>
          <DropCell><RunAction /></DropCell>
          <div className="-mt-[10px] mr-1 ml-1 flex h-[68px] w-[92px] shrink-0 border-x-2 border-[#a2a2a2] bg-linear-to-b from-[#d6d6d6] via-[#b4b4b4] to-[#a6a6a6] pt-[10px] pl-[22px]"><SelectRect /><Arrow /></div>
          <DropCell><SelectExpr /></DropCell>
          <Cell><Deselect /></Cell><Cell><Table /></Cell><Cell><Abacus /></Cell><Cell><Sum /></Cell>
          <DropCell><Ruler /></DropCell>
          <Cell><MapTip /></Cell>
          <DropCell><TextNote /></DropCell>
          <div className="w-5 shrink-0 pl-3"><Grip /></div>
          <Cell><SumCalc /></Cell><Cell><Editor /></Cell>
          <div className="w-4 shrink-0 pl-[10px]"><Grip /></div>
          <Cell><Python /></Cell><Cell><Plug /></Cell>
          <More className="mt-[17px] ml-[62px]" />
        </div>

        {/* plugin toolbar */}
        <div className="flex h-[72px] shrink-0 border-t-2 border-b-2 border-t-white border-b-[#a8a8a8] bg-linear-to-b from-[#eee] to-[#c9c9c9] pt-[10px]">
          <div className="w-5 shrink-0 pl-3"><Grip /></div>
          <Cell2><Layers /></Cell2><Cell2><Download /></Cell2><Cell2><Hexes /></Cell2><Cell2><ImportI /></Cell2><Cell2><ExportI /></Cell2><Cell2><Calc /></Cell2><Cell2><Chart /></Cell2><Cell2><Scatter /></Cell2><Cell2><Ring /></Cell2><Cell2><Tools /></Cell2><Cell2><Book /></Cell2><Cell2><Gear /></Cell2>
          <div className="w-[18px] shrink-0 pl-[11px]"><Grip /></div>
          <Cell2><RoiGreen /></Cell2><Cell2><MagLayers /></Cell2>
          <RadioLabel className="mt-[6px] ml-1 w-[136px]">RGB =</RadioLabel>
          <div className="-mt-[2px] ml-[14px] flex w-[148px] shrink-0">
            <div className="flex h-11 flex-1 items-center border-t-2 border-l-2 border-[#b5b5b5] bg-white pl-1 text-[26px] leading-none">-</div>
            <ComboButton />
          </div>
          <div className="ml-[10px] flex">
            <Cell2><Bell c="#0b6f86" t="%" w="Liberation Sans" /></Cell2><Cell2><Bell c="#860d0d" t="σ" w="Liberation Serif" /></Cell2><Cell2><MagPlus /></Cell2>
          </div>
          <RadioLabel className="mt-[6px] ml-1 w-[134px]">ROI</RadioLabel>
          <div className="ml-1 flex">
            <Cell2><RoiPoly /></Cell2><Cell2><AddBtn /></Cell2><Cell2><UndoBtn /></Cell2>
          </div>
          <span className="mt-[6px] ml-[10px] w-[56px] shrink-0 text-[26px] leading-[26px]">Dist</span>
          <Field className="mt-[2px] h-11 w-[164px] pl-1">0.010000</Field>
          <Spinner className="mt-1 ml-[7px]" />
          <span className="mt-[6px] ml-4 w-[54px] shrink-0 text-[26px] leading-[26px]">Min</span>
          <Field className="mt-[2px] h-11 w-[84px] pl-1">60</Field>
          <Spinner className="mt-1 ml-[7px]" />
          <span className="mt-[6px] ml-4 w-[62px] shrink-0 text-[26px] leading-[26px]">Max</span>
          <Field className="mt-[2px] h-11 w-[84px] pl-1">100</Field>
          <Spinner className="mt-1 ml-[6px]" />
          <More className="mt-[11px] ml-[69px]" />
          <Grip className="ml-[14px]" />
          <div className="ml-[6px]"><GridI /></div>
          <More className="mt-[11px] ml-5" />
          <Grip className="ml-[14px]" />
          <div className="ml-[9px]"><Earth /></div>
        </div>

        {/* body */}
        <div className="flex h-[1470px] shrink-0">
          <div className="flex w-24 shrink-0 flex-col border-r-2 border-[#ababab] bg-linear-to-r from-[#efefef] to-[#c6c6c6]">
            <div className="h-5 shrink-0 pt-[11px] pl-[14px]"><HGrip /></div>
            <SideCell><AddVector /></SideCell>
            <SideCell><AddRaster /></SideCell>
            <SideCell><Feather /></SideCell>
            <SideCell className="pl-6"><Elephant /><Arrow className="ml-1" /></SideCell>
            <SideCell><Globe kind={0} /></SideCell>
            <SideCell><Globe kind={1} /></SideCell>
            <SideCell><Globe kind={2} /></SideCell>
            <SideCell><Comma /></SideCell>
            <SideCell><Virtual /></SideCell>
            <SideCell className="pl-6"><NewShape /><Arrow className="ml-1" /></SideCell>
            <div className="h-[18px] shrink-0 pt-[9px] pl-[14px]"><HGrip /></div>
            <SideCell className="pl-[26px]"><Edits /></SideCell>
            <SideCell className="pl-[26px]"><EditOne /></SideCell>
            <SideCell className="pl-[22px]"><SaveEdits /></SideCell>
            <SideCell className="pl-6"><AddPts /></SideCell>
            <SideCell className="pl-6"><AddCurve /><Arrow className="ml-1" /></SideCell>
            <SideCell className="pl-6"><MovePts /></SideCell>
            <SideCell className="pl-6"><NodeTool /></SideCell>
            <SideCell className="pl-[23px]"><Trash /></SideCell>
            <svg className="mt-[40px] ml-[41px] block h-[22px] w-4 shrink-0" viewBox="0 0 16 22" fill="none"><path d="M1 2l7 7 7-7M1 12l7 7 7-7" stroke="#777" strokeWidth="2.800" /></svg>
          </div>

          {/* layers dock */}
          <div className="flex w-[630px] shrink-0 flex-col">
            <div className="flex h-[52px] shrink-0 items-center border-t-2 border-b-2 border-t-white border-b-[#b0b0b0] bg-linear-to-b from-[#eee] to-[#cbcbcb] pl-[6px]">
              <svg className="-mt-1 size-7 shrink-0" viewBox="0 0 28 28" fill="none"><circle cx="14" cy="14" r="14" fill="#444" /><path d="M8.500 8.500l11 11M19.500 8.500l-11 11" stroke="#fff" strokeWidth="4.200" /></svg>
              <svg className="-mt-1 ml-3 size-7 shrink-0" viewBox="0 0 28 28" fill="none"><circle cx="14" cy="14" r="14" fill="#444" /><path d="M11 11V8h10v9h-3M7 12h11v9H7z" stroke="#fff" strokeWidth="2.400" /></svg>
              <div className="-mt-[2px] flex-1 pl-[2px] text-center text-[22px] leading-[26px]">Layers Panel</div>
            </div>
            <div className="flex h-[52px] shrink-0 border-t-2 border-white bg-linear-to-b from-[#eee] to-[#c9c9c9] pt-[10px] pl-[13px]">
              <Broom />
              <div className="ml-[27px]"><AddGroup /></div>
              <div className="ml-7"><Eye /></div>
              <div className="ml-[23px]"><Funnel /></div>
              <div className="ml-[44px] flex"><ExprFilter /><svg className="mt-[17px] block size-4" viewBox="0 0 16 16"><path d="M0 0h16L8 16z" fill="#666" /></svg></div>
              <div className="ml-[21px]"><Tree /></div>
              <div className="ml-7"><Tree up /></div>
              <div className="ml-[27px]"><Remove /></div>
            </div>
            <div className="-mr-1 -ml-[2px] flex h-[1328px] shrink-0 flex-col border-4 border-t-6 border-[#74a4d8] bg-white">
              {TOP.map((l) => <LayerRow key={l.kind + l.name} l={l} />)}
              {LEGEND.map(([c, t]) => (
                <div key={t} className="flex h-9 shrink-0 items-center pl-[90px]">
                  <span className="size-8 shrink-0" style={{ backgroundColor: c }} />
                  <span className="-mt-[4px] ml-3 text-[26px] leading-[30px]">{t}</span>
                </div>
              ))}
              {REST.map((l) => <LayerRow key={l.name} l={l} />)}
            </div>
            <div className="flex h-[38px] shrink-0 pl-[23px] text-[26px] leading-[30px]">
              <div className="w-[220px] shrink-0 rounded-bl-[8px] border-r-2 border-b-2 border-l-2 border-r-[#ddd] border-b-[#b5b5b5] border-l-[#c5c5c5] bg-white pl-[17px]">Identify Results</div>
              <div className="w-[165px] shrink-0 border-b-2 border-[#b5b5b5] bg-white pl-[25px]">SCP Dock</div>
              <div className="w-[200px] shrink-0 rounded-br-[8px] bg-linear-to-b from-[#6cb3fa] to-[#1a80fc] pl-[28px] whitespace-nowrap text-white">Layers Panel</div>
            </div>
          </div>

          {/* map */}
          <div className="flex-1 border-t-2 border-r-2 border-b-2 border-l-4 border-t-[#8c8c8c] border-r-[#b4b4b4] border-b-[#b4b4b4] border-l-[#9a9a9a] bg-white">
            <MapCanvas />
          </div>
        </div>

        {/* status bar */}
        <div className="flex flex-1 pl-[974px] text-[26px] leading-[26px]">
          <span className="mt-[28px] w-[134px] shrink-0">Coordinate</span>
          <Field className="mt-[22px] h-[42px] w-[256px] pl-[18px]">122.2031,15.0631</Field>
          <div className="mt-[18px] flex h-[52px] w-[52px] shrink-0 items-center justify-center border-2 border-[#aeaeae] bg-linear-to-b from-[#dedede] to-[#f5f5f5]">
            <svg className="h-8 w-8" viewBox="0 0 32 32" fill="none"><path d="M5 5l11 16M11 3l10 14M2 12l9 13" stroke="#222" strokeWidth="4" /><path d="M8 5l10 14" stroke="#ddd" strokeWidth="1.500" /><path d="M1 23L29 2" stroke="#888" strokeWidth="1.500" strokeDasharray="3 3" /><circle cx="19" cy="24" r="7" fill="#eee" stroke="#222" strokeWidth="2.400" /><path d="M19 20v4h3M24 12l5 6" stroke="#222" strokeWidth="1.800" /></svg>
          </div>
          <span className="mt-[26px] ml-[18px] w-[72px] shrink-0">Scale</span>
          <div className="mt-[18px] flex w-[236px] shrink-0">
            <div className="flex h-11 flex-1 items-center border-t-2 border-l-2 border-[#b5b5b5] bg-white pl-[5px] leading-none">1:248,175</div>
            <ComboButton />
          </div>
          <div className="mt-4 flex h-[52px] w-[52px] shrink-0 items-center justify-center border-2 border-[#aeaeae] bg-linear-to-b from-[#dedede] to-[#f5f5f5]">
            <svg className="h-8 w-6" viewBox="0 0 24 32" fill="none"><path d="M6 16V9q0-7 6-7t6 7v7" stroke="#888" strokeWidth="3" /><rect x="0" y="15" width="24" height="17" rx="2.500" fill="#666" /></svg>
          </div>
          <span className="mt-[28px] ml-[18px] w-[116px] shrink-0">Magnifier</span>
          <Field className="mt-[22px] h-11 w-[128px] pl-[5px]">100%</Field>
          <Spinner className="mt-6 ml-[6px]" />
          <span className="mt-[28px] ml-[20px] w-[118px] shrink-0">Rotation</span>
          <Field className="mt-[22px] h-11 w-[128px] pl-[5px]">0.0</Field>
          <Spinner className="mt-6 ml-[7px]" />
          <Check on className="mt-[30px] ml-[14px]" />
          <span className="mt-[28px] ml-[8px] w-[90px] shrink-0">Render</span>
          <div className="mt-[26px] flex h-9 w-[214px] shrink-0 border-2 border-[#aeaeae] bg-linear-to-b from-[#dedede] to-[#f7f7f7] pl-[7px]">
            <svg className="size-8 shrink-0" viewBox="0 0 32 32" fill="none" stroke="#858585"><circle cx="16" cy="16" r="12.500" strokeWidth="4.500" /><path d="M16 0v32M0 16h32" strokeWidth="3" /><ellipse cx="16" cy="16" rx="6" ry="8" strokeWidth="1.800" /></svg>
            <span className="ml-2">EPSG:4326</span>
          </div>
          <div className="mt-[26px] ml-3 flex h-9 w-[76px] shrink-0 border-2 border-[#aeaeae] bg-linear-to-b from-[#dedede] to-[#f7f7f7] pl-2">
            <svg className="size-8" viewBox="0 0 32 32"><ellipse cx="16" cy="14.500" rx="16" ry="12.500" fill="#636363" /><path d="M18 24l11 7-3-10z" fill="#636363" /><path d="M7 13h4v4H7zM14 13h4v4h-4zM21 13h4v4h-4z" fill="#fff" /></svg>
          </div>
          <svg className="mt-auto mr-[1px] mb-[2px] ml-auto size-[22px]" viewBox="0 0 22 22"><path d="M1 21L21 1M8 21L21 8M15 21l6-6" stroke="#777" strokeWidth="2" /></svg>
        </div>
      </div>
    </div>
  );
}
